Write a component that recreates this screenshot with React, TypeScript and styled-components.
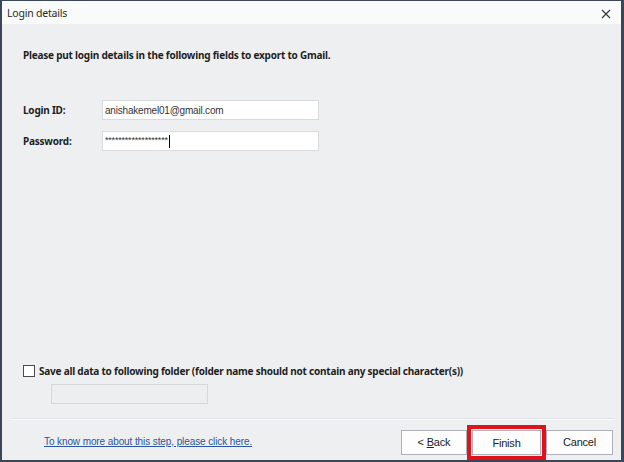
import React from 'react';
import styled, { createGlobalStyle } from 'styled-components';

const GlobalStyle = createGlobalStyle`
  html, body {
    margin: 0;
    padding: 0;
    background: #ffffff;
  }
  * {
    box-sizing: border-box;
  }
`;

const Window = styled.div`
  width: 624px;
  height: 462px;
  display: flex;
  flex-direction: column;
  background: #edeff1;
  border-style: solid;
  border-color: #3b4656;
  border-width: 1px 3px 2px 2px;
  font-family: "Noto Sans", "Open Sans", sans-serif;
  color: #1e1e1e;
`;

const TitleBar = styled.div`
  height: 23px;
  flex: none;
  display: flex;
  align-items: center;
  justify-content: space-between;
  padding: 0 9px 0 5px;
  background: #f9fafa;
`;

const Title = styled.span`
  font-size: 10.5px;
  letter-spacing: -0.2px;
  color: #2a2a2a;
`;

const CloseButton = styled.span`
  display: flex;
  align-items: center;
  justify-content: center;
  width: 12px;
  height: 12px;
  margin-top: 3px;
`;

const Body = styled.div`
  flex: 1;
  display: flex;
  flex-direction: column;
`;

const BoldText = styled.span`
  font-size: 10px;
  font-weight: 700;
  letter-spacing: -0.22px;
  line-height: 14px;
`;

const Instruction = styled(BoldText)`
  display: block;
  margin: 24px 0 0 21px;
`;

const Form = styled.div`
  margin: 38px 0 0 21px;
  display: flex;
  flex-direction: column;
  gap: 11px;
`;

const Row = styled.div`
  display: flex;
  align-items: center;
`;

const Label = styled(BoldText)`
  width: 79px;
`;

const Field = styled.div<{ $width: number; $disabled?: boolean }>`
  width: ${p => p.$width}px;
  height: 20px;
  display: flex;
  align-items: center;
  padding: 0 2px;
  background: ${p => (p.$disabled ? '#eceef0' : '#ffffff')};
  border: 1px solid ${p => (p.$disabled ? '#d6d8da' : '#d9dadb')};
  font-family: "Liberation Sans", Arial, sans-serif;
  font-size: 10px;
  letter-spacing: -0.2px;
  color: #333;
`;

const Masked = styled.span`
  font-size: 9px;
  letter-spacing: -0.2px;
  line-height: 1;
  margin-top: -2px;
`;

const Caret = styled.span`
  width: 1px;
  height: 13px;
  background: #000;
  margin-left: 1px;
`;

const Spacer = styled.div`
  flex: 1;
`;

const CheckRow = styled.label`
  display: flex;
  align-items: center;
  gap: 4px;
  margin-left: 21px;
`;

const CheckBox = styled.span`
  width: 12px;
  height: 12px;
  background: #ffffff;
  border: 1px solid #4a4a4a;
`;

const FolderField = styled(Field)`
  margin: 6px 0 0 49px;
  height: 20px;
`;

const Divider = styled.div`
  margin: 14px 7px 0 10px;
  border-top: 1px solid #dfe1e4;
  border-bottom: 1px solid #fbfbfc;
`;

const Footer = styled.div`
  display: flex;
  justify-content: space-between;
  align-items: flex-start;
  padding: 5px 8px 0 42px;
`;

const HelpLink = styled.a`
  margin-top: 11px;
  font-family: "Liberation Sans", Arial, sans-serif;
  font-size: 10px;
  letter-spacing: -0.1px;
  color: #2b5597;
  text-decoration: underline;
  cursor: pointer;
`;

const ButtonRow = styled.div`
  display: flex;
  align-items: center;
`;

const Button = styled.button<{ $width: number }>`
  width: ${p => p.$width}px;
  height: 25px;
  padding: 0;
  background: #fdfdfd;
  border: 1px solid #adb2b8;
  font-family: "Liberation Sans", Arial, sans-serif;
  font-size: 11px;
  letter-spacing: -0.2px;
  color: #222;
`;

const Highlight = styled.div`
  padding: 1px;
  border: 4px solid #e0121c;
`;

export default function App() {
  return (
    <>
      <GlobalStyle />
      <Window>
        <TitleBar>
          <Title>Login details</Title>
          <CloseButton>
            <svg width="10" height="10" viewBox="0 0 10 10">
              <path d="M1 1 L9 9 M9 1 L1 9" stroke="#3a3a3a" strokeWidth="1.2" />
            </svg>
          </CloseButton>
        </TitleBar>
        <Body>
          <Instruction>Please put login details in the following fields to export to Gmail.</Instruction>
          <Form>
            <Row>
              <Label>Login ID:</Label>
              <Field $width={217}>anishakemel01@gmail.com</Field>
            </Row>
            <Row>
              <Label>Password:</Label>
              <Field $width={217}>
                <Masked>*******************</Masked>
                <Caret />
              </Field>
            </Row>
          </Form>
          <Spacer />
          <CheckRow>
            <CheckBox />
            <BoldText>Save all data to following folder (folder name should not contain any special character(s))</BoldText>
          </CheckRow>
          <FolderField $width={157} $disabled />
          <Divider />
          <Footer>
            <HelpLink>To know more about this step, please click here.</HelpLink>
            <ButtonRow>
              <Button $width={66}>&lt; <u>B</u>ack</Button>
              <Highlight>
                <Button $width={69}>Finish</Button>
              </Highlight>
              <Button $width={67}>Cancel</Button>
            </ButtonRow>
          </Footer>
        </Body>
      </Window>
    </>
  );
}
